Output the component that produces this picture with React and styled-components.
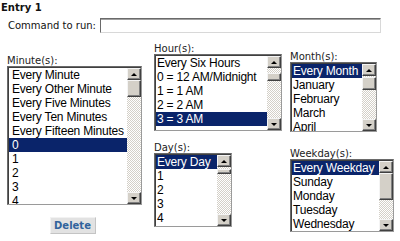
import React from 'react';
import styled, { createGlobalStyle } from 'styled-components';

const GlobalStyle = createGlobalStyle`
    html, body {
        margin: 0;
        padding: 0;
        background: #fff;
    }
    body {
        width: 400px;
        height: 241px;
        overflow: hidden;
        font-family: "DejaVu Sans", Verdana, sans-serif;
        color: #111;
    }
`;

const Page = styled.div`
    padding: 2px 0 0 1px;
`;

const Title = styled.div`
    font-size: 10px;
    line-height: 12px;
    font-weight: bold;
`;

const CommandRow = styled.div`
    display: flex;
    align-items: center;
    gap: 4px;
    margin-top: 4px;
    padding-left: 7px;
    font-size: 10px;
`;

const CommandInput = styled.input`
    width: 281px;
    height: 15px;
    box-sizing: border-box;
    margin: 0;
    padding: 0 2px;
    border: 1px solid;
    border-color: #6a6a6a #d8d8d8 #d8d8d8 #6a6a6a;
    box-shadow: inset 0 1px 0 #a0a0a0;
    background: #fff;
    outline: none;
`;

const Columns = styled.div`
    display: flex;
    align-items: flex-start;
    margin-top: 11px;
    padding-left: 6px;
`;

const Column = styled.div`
    display: flex;
    flex-direction: column;
    margin-top: ${p => p.$top || 0}px;
    margin-left: ${p => p.$left || 0}px;
`;

const Field = styled.div`
    margin-top: ${p => p.$top || 0}px;
`;

const Label = styled.div`
    font-size: 10px;
    line-height: 10px;
    color: #222;
`;

const Box = styled.div`
    display: flex;
    width: ${p => p.$w}px;
    height: ${p => p.$h}px;
    box-sizing: border-box;
    border: 1px solid;
    border-color: #6a6a6a #9a9a9a #9a9a9a #6a6a6a;
    background: #fff;
`;

const Options = styled.div`
    flex: 1;
    min-width: 0;
    overflow: hidden;
    border-top: 1px solid #404040;
    border-left: 1px solid #404040;
`;

const Option = styled.div`
    height: 14px;
    line-height: 14px;
    padding-left: ${p => p.$pad}px;
    white-space: nowrap;
    font-family: "Liberation Sans", Arial, sans-serif;
    font-size: 12px;
    letter-spacing: -0.2px;
    color: ${p => (p.$selected ? '#fff' : '#000')};
    background: ${p => (p.$selected ? '#0a246a' : 'transparent')};
`;

const ScrollBar = styled.div`
    flex: none;
    width: 14px;
    display: flex;
    flex-direction: column;
    border-top: 1px solid #404040;
`;

const ArrowButton = styled.div`
    flex: none;
    height: 12px;
    box-sizing: border-box;
    display: flex;
    align-items: center;
    justify-content: center;
    background: #d4d0c8;
    border: 1px solid;
    border-color: #f4f4f4 #404040 #404040 #f4f4f4;
    box-shadow: inset -1px -1px 0 #808080;
    &::after {
        content: '';
        width: 0;
        height: 0;
        border-left: 3px solid transparent;
        border-right: 3px solid transparent;
        ${p => (p.$down ? 'border-top: 3px solid #000;' : 'border-bottom: 3px solid #000;')}
    }
`;

const Track = styled.div`
    flex: 1;
    display: flex;
    flex-direction: column;
    background: repeating-conic-gradient(#d4d0c8 0 25%, #fff 0 50%) 0 0 / 2px 2px;
`;

const Thumb = styled.div`
    flex: none;
    height: ${p => p.$size}px;
    margin-top: ${p => p.$at}px;
    box-sizing: border-box;
    background: #d4d0c8;
    border: 1px solid;
    border-color: #f4f4f4 #404040 #404040 #f4f4f4;
    box-shadow: inset -1px -1px 0 #808080;
`;

const DeleteButton = styled.button`
    align-self: center;
    margin: 12px 0 0 -4px;
    width: 46px;
    height: 17px;
    padding: 0;
    font-family: "DejaVu Sans", Verdana, sans-serif;
    font-size: 10px;
    font-weight: bold;
    color: #31639c;
    background: #e2e2e2;
    border: 1px solid;
    border-color: #f2f2f2 #c4c4c4 #c4c4c4 #f2f2f2;
`;

const ListBox = ({ label, w, h, items, selected, thumb, pad = 1, top }) => (
    <Field $top={top}>
        <Label>{label}</Label>
        <Box $w={w} $h={h}>
            <Options>
                {items.map((it, i) => (
                    <Option key={it} $pad={pad} $selected={i === selected}>{it}</Option>
                ))}
            </Options>
            <ScrollBar>
                <ArrowButton />
                <Track>
                    <Thumb $at={thumb.at} $size={thumb.size} />
                </Track>
                <ArrowButton $down />
            </ScrollBar>
        </Box>
    </Field>
);

const minutes = ['Every Minute', 'Every Other Minute', 'Every Five Minutes', 'Every Ten Minutes', 'Every Fifteen Minutes', '0', '1', '2', '3', '4'];
const hours = ['Every Six Hours', '0 = 12 AM/Midnight', '1 = 1 AM', '2 = 2 AM', '3 = 3 AM'];
const days = ['Every Day', '1', '2', '3', '4'];
const months = ['Every Month', 'January', 'February', 'March', 'April'];
const weekdays = ['Every Weekday', 'Sunday', 'Monday', 'Tuesday', 'Wednesday'];

const App = () => {
    return (
        <>
            <GlobalStyle />
            <Page>
                <Title>Entry 1</Title>
                <CommandRow>
                    <span>Command to run:</span>
                    <CommandInput type="text" />
                </CommandRow>
                <Columns>
                    <Column $top={12}>
                        <ListBox label="Minute(s):" w={135} h={139} items={minutes} selected={5} pad={3} thumb={{ at: 0, size: 17 }} />
                        <DeleteButton>Delete</DeleteButton>
                    </Column>
                    <Column $left={12}>
                        <ListBox label="Hour(s):" w={128} h={77} items={hours} selected={4} thumb={{ at: 5, size: 8 }} />
                        <ListBox label="Day(s):" w={78} h={74} items={days} selected={0} top={12} thumb={{ at: 2, size: 5 }} />
                    </Column>
                    <Column $left={8} $top={8}>
                        <ListBox label="Month(s):" w={87} h={70} items={months} selected={0} thumb={{ at: 1, size: 13 }} />
                        <ListBox label="Weekday(s):" w={104} h={73} items={weekdays} selected={0} top={17} thumb={{ at: 0, size: 27 }} />
                    </Column>
                </Columns>
            </Page>
        </>
    );
};

export default App;
